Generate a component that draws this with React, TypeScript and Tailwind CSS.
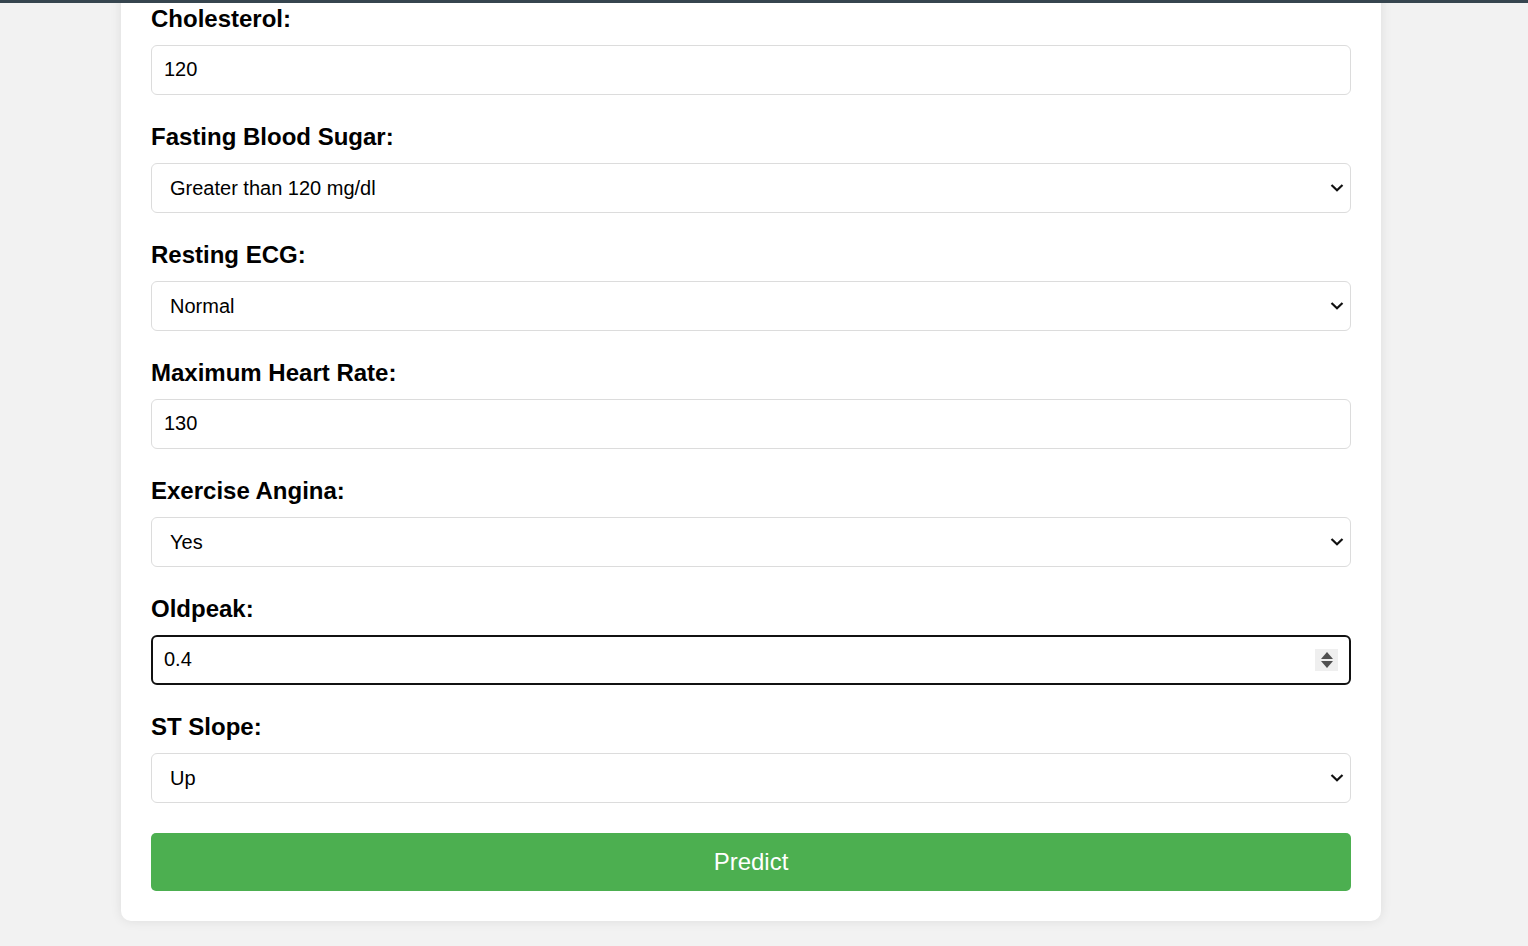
import { ReactNode } from 'react'

type Field = {
  label: string
  kind: 'input' | 'select' | 'number'
  value: string
}

const fields: Field[] = [
  { label: 'Cholesterol:', kind: 'input', value: '120' },
  { label: 'Fasting Blood Sugar:', kind: 'select', value: 'Greater than 120 mg/dl' },
  { label: 'Resting ECG:', kind: 'select', value: 'Normal' },
  { label: 'Maximum Heart Rate:', kind: 'input', value: '130' },
  { label: 'Exercise Angina:', kind: 'select', value: 'Yes' },
  { label: 'Oldpeak:', kind: 'number', value: '0.4' },
  { label: 'ST Slope:', kind: 'select', value: 'Up' },
]

function Chevron() {
  return (
    <svg width="14" height="9" viewBox="0 0 14 9" className="pointer-events-none absolute right-[7px] top-1/2 -translate-y-1/2">
      <polyline points="1.5,1.5 7,6.8 12.5,1.5" fill="none" stroke="#111" strokeWidth="2.2" />
    </svg>
  )
}

function Stepper() {
  return (
    <span className="pointer-events-none absolute right-[13px] top-1/2 -translate-y-1/2 flex h-[22px] w-[23px] flex-col items-center justify-center gap-[2px] bg-[#efefef]">
      <svg width="12" height="7" viewBox="0 0 12 7">
        <polygon points="6,0 12,7 0,7" fill="#505050" />
      </svg>
      <svg width="12" height="7" viewBox="0 0 12 7">
        <polygon points="0,0 12,0 6,7" fill="#505050" />
      </svg>
    </span>
  )
}

function Control({ field }: { field: Field }): ReactNode {
  if (field.kind === 'select') {
    return (
      <div className="relative h-[49.5px] w-full">
        <select
          defaultValue={field.value}
          className="h-full w-full appearance-none rounded-[6px] border border-[#dcdcdc] bg-white pl-[18px] text-[20px] text-black outline-none"
        >
          <option>{field.value}</option>
        </select>
        <Chevron />
      </div>
    )
  }

  if (field.kind === 'number') {
    return (
      <div className="relative h-[49.5px] w-full">
        <input
          readOnly
          value={field.value}
          className="h-full w-full rounded-[6px] border-2 border-[#111] bg-white pl-[11px] text-[20px] text-black outline-none"
        />
        <Stepper />
      </div>
    )
  }

  return (
    <input
      readOnly
      value={field.value}
      className="h-[49.5px] w-full rounded-[6px] border border-[#dcdcdc] bg-white pl-[12px] text-[20px] text-black outline-none"
    />
  )
}

export default function App() {
  return (
    <div className="min-h-[946px] overflow-hidden bg-[#f2f2f2] font-['Liberation_Sans',Arial,sans-serif]">
      <div className="relative z-10 h-[3px] bg-[#36454f]" />
      <div className="ml-[121px] -mt-[29px] w-[1260px] rounded-[10px] bg-white p-[30px] shadow-[0_0_12px_rgba(0,0,0,0.09)]">
        {fields.map((field) => (
          <div key={field.label} className="mb-[27.5px]">
            <label className="mb-[12px] block h-[29px] pt-[1px] text-[24px] font-bold leading-[28px] text-black">
              {field.label}
            </label>
            <Control field={field} />
          </div>
        ))}
        <button className="mt-[2.5px] h-[58px] w-full rounded-[5px] bg-[#4caf50] text-[24px] text-white">
          Predict
        </button>
      </div>
    </div>
  )
}
